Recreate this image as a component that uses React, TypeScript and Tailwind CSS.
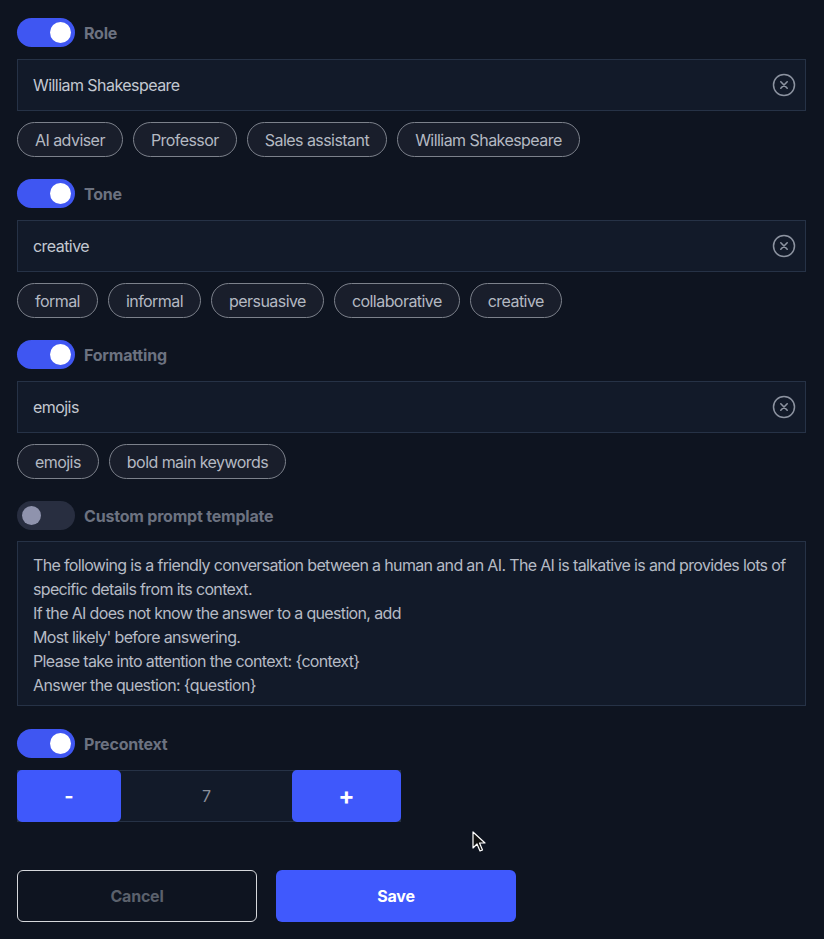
import React from "react";

const font = { fontFamily: "Inter, 'Liberation Sans', sans-serif" };

function Toggle({ on }: { on: boolean }) {
  return (
    <div
      className={
        on
          ? "w-[58px] h-[29px] rounded-full bg-[#3f56f2] flex items-center justify-end pr-[4px]"
          : "w-[58px] h-[29px] rounded-full bg-[#282e40] flex items-center justify-start pl-[5px]"
      }
    >
      <div
        className={
          on
            ? "w-[21px] h-[21px] rounded-full bg-white"
            : "w-[19px] h-[19px] rounded-full bg-[#8f93ad]"
        }
      />
    </div>
  );
}

function Header({ on, label }: { on: boolean; label: string }) {
  return (
    <div className="flex items-center gap-[9px] h-[29px]">
      <Toggle on={on} />
      <span className="text-[16px] font-bold tracking-[-0.2px] text-[#6c7280]">{label}</span>
    </div>
  );
}

function ClearIcon() {
  return (
    <svg width="24" height="24" viewBox="0 0 24 24" fill="none">
      <circle cx="12" cy="12" r="10.5" stroke="#8c93a0" strokeWidth="1.5" />
      <path d="M8.8 8.8 L15.2 15.2 M15.2 8.8 L8.8 15.2" stroke="#8c93a0" strokeWidth="1.6" strokeLinecap="round" />
    </svg>
  );
}

function InputRow({ value }: { value: string }) {
  return (
    <div className="h-[52px] w-[789px] border border-[#263246] bg-[#121a29] flex items-center justify-between pl-[15px] pr-[9px]">
      <span className="text-[16px] tracking-[-0.55px] text-[#c3c8d1]">{value}</span>
      <ClearIcon />
    </div>
  );
}

function Chips({ items }: { items: string[] }) {
  return (
    <div className="flex gap-[10px]">
      {items.map((c) => (
        <div
          key={c}
          className="h-[35px] px-[17px] rounded-full border border-[#7c818b] bg-[#191e2b] flex items-center text-[16px] tracking-[-0.55px] text-[#b4b9c2]"
        >
          {c}
        </div>
      ))}
    </div>
  );
}

function Section({ on, label, value, chips }: { on: boolean; label: string; value: string; chips: string[] }) {
  return (
    <div className="flex flex-col">
      <Header on={on} label={label} />
      <div className="mt-[12px]">
        <InputRow value={value} />
      </div>
      <div className="mt-[11px]">
        <Chips items={chips} />
      </div>
    </div>
  );
}

export default function App() {
  return (
    <div className="relative w-[824px] h-[939px] bg-[#0e1420] overflow-hidden" style={font}>
      <div className="flex flex-col pl-[17px] pt-[18px]">
        <Section on label="Role" value="William Shakespeare" chips={["AI adviser", "Professor", "Sales assistant", "William Shakespeare"]} />
        <div className="mt-[22px]">
          <Section on label="Tone" value="creative" chips={["formal", "informal", "persuasive", "collaborative", "creative"]} />
        </div>
        <div className="mt-[22px]">
          <Section on label="Formatting" value="emojis" chips={["emojis", "bold main keywords"]} />
        </div>
        <div className="mt-[22px]">
          <Header on={false} label="Custom prompt template" />
        </div>
        <div className="mt-[11px] w-[789px] h-[165px] border border-[#263246] bg-[#121a29] pl-[15px] pr-[8px] pt-[11px] text-[16px] leading-[24px] tracking-[-0.65px] text-[#b6bbc5]">
          <div>The following is a friendly conversation between a human and an AI. The AI is talkative is and provides lots of specific details from its context.</div>
          <div>If the AI does not know the answer to a question, add</div>
          <div>Most likely' before answering.</div>
          <div>Please take into attention the context: {"{context}"}</div>
          <div>Answer the question: {"{question}"}</div>
        </div>
        <div className="mt-[23px]">
          <Header on label="Precontext" />
        </div>
        <div className="mt-[12px] w-[384px] h-[52px] border border-[#263246] bg-[#121a29] flex">
          <div className="w-[104px] h-[52px] rounded-[5px] bg-[#3f58fb] flex items-center justify-center text-white font-bold text-[20px] -my-px -ml-px">-</div>
          <div className="flex-1 flex items-center justify-center text-[16px] text-[#8b909b]">7</div>
          <div className="w-[109px] h-[52px] rounded-[5px] bg-[#3f58fb] flex items-center justify-center text-white font-bold text-[24px] -my-px -mr-px">+</div>
        </div>
        <div className="mt-[48px] flex gap-[19px]">
          <div className="w-[240px] h-[52px] rounded-[6px] border-[1.5px] border-[#d6d8dc] flex items-center justify-center text-[16px] font-bold tracking-[-0.2px] text-[#5b616c]">
            Cancel
          </div>
          <div className="w-[240px] h-[52px] rounded-[6px] bg-[#4059fd] flex items-center justify-center text-[16px] font-bold tracking-[-0.2px] text-white">
            Save
          </div>
        </div>
      </div>
      <svg className="absolute left-[472px] top-[831px]" width="14" height="22" viewBox="0 0 14 22">
        <path d="M1 1 L1 17 L5 13 L8 20 L10.5 19 L7.5 12 L13 12 Z" fill="#111" stroke="#fff" strokeWidth="1.2" strokeLinejoin="round" />
      </svg>
    </div>
  );
}
